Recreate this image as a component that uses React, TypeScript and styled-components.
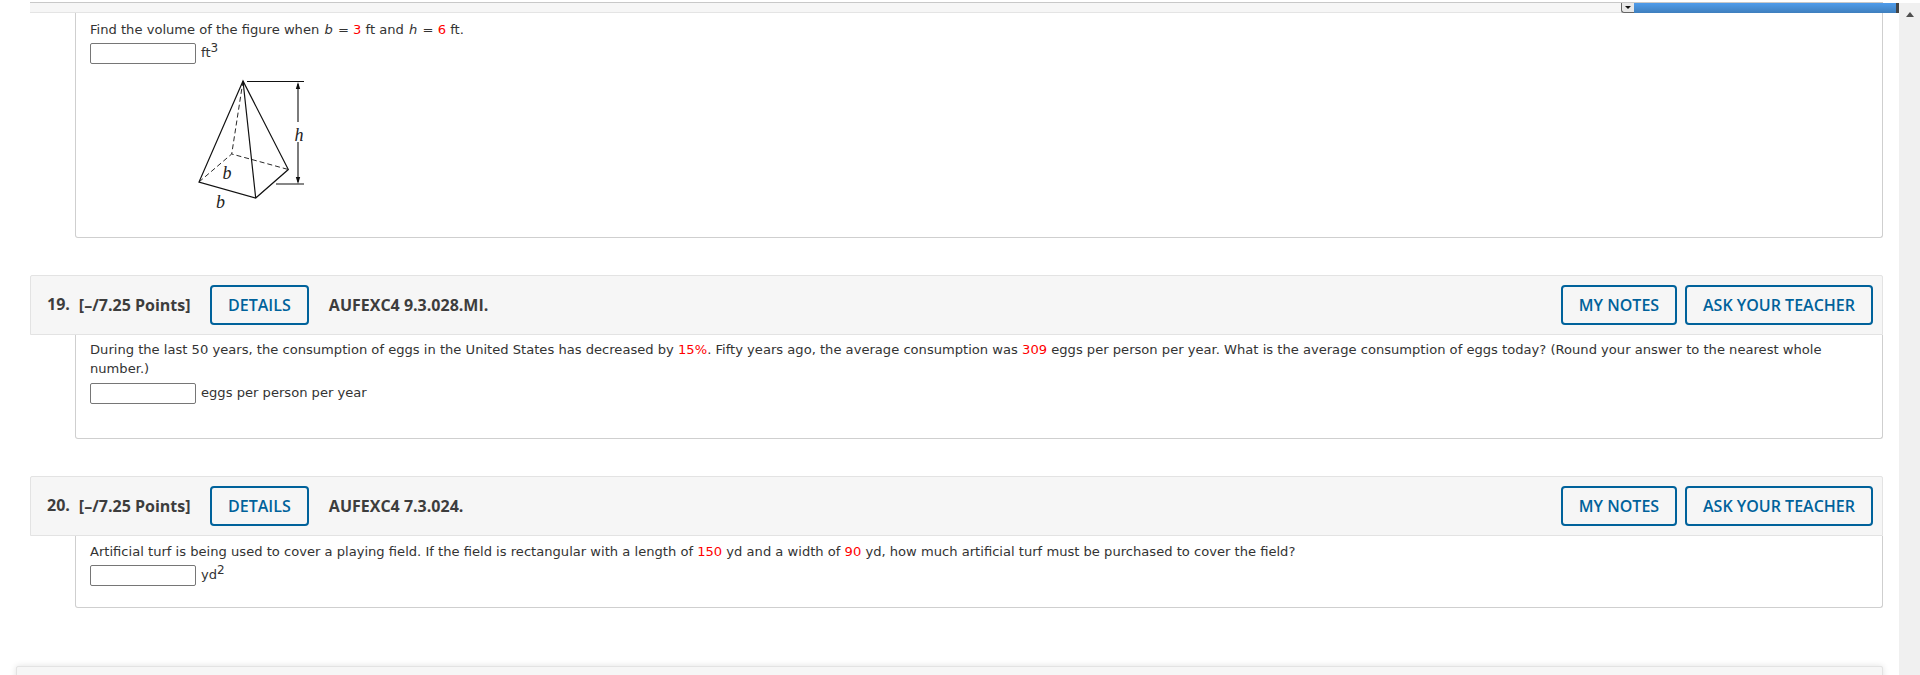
import styled, { createGlobalStyle } from "styled-components";

const GlobalStyle = createGlobalStyle`
  html, body {
    margin: 0;
    padding: 0;
    background: #fff;
    overflow: hidden;
  }
`;

const Page = styled.div`
  display: flex;
  width: 1920px;
  height: 675px;
  overflow: hidden;
  position: relative;
`;
const Main = styled.div`
  flex: 1;
  min-width: 0;
  padding: 0 16px 0 30px;
  border-top: 2px solid #fff;
`;
const TopStrip = styled.div`
  height: 9px;
  background: #f6f6f6;
  border-top: 1px solid #c8c8c8;
  border-bottom: 1px solid #e4e4e4;
`;
const Body = styled.div<{ $height: number; $top: number }>`
  box-sizing: border-box;
  height: ${(p) => p.$height}px;
  margin-left: 45px;
  padding: ${(p) => p.$top}px 14px 0;
  background: #fff;
  border: 1px solid #cfcfcf;
  border-top: none;
  border-radius: 0 0 3px 3px;
  font-family: "DejaVu Sans", Verdana, sans-serif;
  font-size: 13.1px;
  line-height: 18.5px;
  color: #333;
`;
const Prompt = styled.div`
  color: #333;
`;
const Red = styled.span`
  color: #f00;
`;
const Var = styled.i`
  font-style: italic;
  margin: 0 1px;
`;
const AnswerRow = styled.div<{ $gap: number }>`
  display: flex;
  align-items: center;
  gap: 5px;
  margin-top: ${(p) => p.$gap}px;
`;
const AnswerInput = styled.input`
  box-sizing: border-box;
  width: 106px;
  height: 21px;
  padding: 0;
  background: #fff;
  border: 1px solid #767676;
  border-radius: 2px;
`;
const Unit = styled.span`
  sup {
    font-size: 12px;
    line-height: 0;
  }
`;
const Figure = styled.svg`
  display: block;
  margin: 11px 0 0 100px;
`;
const Header = styled.div<{ $gapTop: number }>`
  display: flex;
  align-items: center;
  box-sizing: border-box;
  height: 60px;
  margin-top: ${(p) => p.$gapTop}px;
  padding: 0 9px 0 16px;
  background: #f6f6f6;
  border: 1px solid #e3e3e3;
  border-radius: 2px 2px 0 0;
  font-family: "Open Sans", sans-serif;
  font-weight: 700;
  font-size: 16px;
  color: #3d3d3d;
`;
const QuestionNumber = styled.span`
  margin-right: 9px;
  transform: translateY(-1px);
`;
const Points = styled.span`
  flex: none;
  width: 131px;
`;
const Code = styled.span`
  margin-left: 20px;
  flex: 1;
`;
const OutlineButton = styled.button<{ $width: number }>`
  box-sizing: border-box;
  width: ${(p) => p.$width}px;
  height: 40px;
  padding: 0;
  background: transparent;
  border: 2px solid #00629b;
  border-radius: 4px;
  font-family: "Open Sans", sans-serif;
  font-weight: 600;
  font-size: 16px;
  color: #00629b;
  & + & {
    margin-left: 8px;
  }
`;
const BottomCard = styled.div`
  height: 30px;
  margin: 58px 0 0 -14px;
  background: #f6f6f6;
  border: 1px solid #e3e3e3;
  border-radius: 2px;
  box-shadow: 0 0 6px rgba(0, 0, 0, 0.12);
`;
const ProgressBar = styled.div`
  position: absolute;
  top: 3px;
  left: 1634px;
  width: 265px;
  height: 10px;
  box-sizing: border-box;
  background: linear-gradient(#4f9ceb, #3f7fbd);
  border-right: 3px solid #444;
`;
const Toggle = styled.div`
  position: absolute;
  top: 3px;
  left: 1621px;
  width: 13px;
  height: 10px;
  box-sizing: border-box;
  display: flex;
  align-items: center;
  justify-content: center;
  background: #e8e8e8;
  border-left: 1px solid #666;
  border-bottom: 1px solid #666;
  border-radius: 0 0 0 3px;
  &::after {
    content: "";
    border-left: 3px solid transparent;
    border-right: 3px solid transparent;
    border-top: 3px solid #111;
  }
`;
const Scrollbar = styled.div`
  flex: none;
  width: 21px;
  background: #f0f0f0;
  margin-top: 3px;
  display: flex;
  justify-content: center;
  padding-top: 9px;
  box-sizing: border-box;
  &::before {
    content: "";
    width: 0;
    height: 0;
    border-left: 4.5px solid transparent;
    border-right: 4.5px solid transparent;
    border-bottom: 5px solid #505050;
  }
`;

function Pyramid() {
  return (
    <Figure width="130" height="140" viewBox="190 75 130 140" fill="none" stroke="#111">
      <path d="M243 81 L199 182 L255.7 198 L288.3 169.5 Z M243 81 L255.7 198" strokeWidth="1.2" />
      <path d="M243 81 L231.7 154 M199 182 L231.7 154 L288.3 169.5" strokeWidth="0.9" strokeDasharray="5 3" />
      <path d="M247 81.5 H304 M276 184 H304 M298 84 V122 M298 142 V182" strokeWidth="1.1" />
      <path d="M298 82 l-2.2 7 h4.4 Z M298 184 l-2.2 -7 h4.4 Z" fill="#111" stroke="none" />
      <g fill="#222" stroke="none" fontFamily="'Liberation Serif', serif" fontStyle="italic" fontSize="18">
        <text x="294.5" y="141">h</text>
        <text x="222.5" y="179">b</text>
        <text x="216" y="208">b</text>
      </g>
    </Figure>
  );
}

interface QuestionHeaderProps {
  num: number;
  code: string;
  gapTop: number;
}

function QuestionHeader({ num, code, gapTop }: QuestionHeaderProps) {
  return (
    <Header $gapTop={gapTop}>
      <QuestionNumber>{num}.</QuestionNumber>
      <Points>[–/7.25 Points]</Points>
      <OutlineButton $width={99}>DETAILS</OutlineButton>
      <Code>{code}</Code>
      <OutlineButton $width={116}>MY NOTES</OutlineButton>
      <OutlineButton $width={188}>ASK YOUR TEACHER</OutlineButton>
    </Header>
  );
}

export default function App() {
  return (
    <Page>
      <GlobalStyle />
      <Main>
        <TopStrip />
        <Body $height={225} $top={8}>
          <Prompt>
            Find the volume of the figure when <Var>b</Var> = <Red>3</Red> ft and <Var>h</Var> = <Red>6</Red> ft.
          </Prompt>
          <AnswerRow $gap={3.5}>
            <AnswerInput />
            <Unit>
              ft<sup>3</sup>
            </Unit>
          </AnswerRow>
          <Pyramid />
        </Body>

        <QuestionHeader num={19} code="AUFEXC4 9.3.028.MI." gapTop={37} />
        <Body $height={104} $top={6}>
          <Prompt>
            During the last 50 years, the consumption of eggs in the United States has decreased by <Red>15%</Red>. Fifty
            years ago, the average consumption was <Red>309</Red> eggs per person per year. What is the average
            consumption of eggs today? (Round your answer to the nearest whole number.)
          </Prompt>
          <AnswerRow $gap={5}>
            <AnswerInput />
            <Unit>eggs per person per year</Unit>
          </AnswerRow>
        </Body>

        <QuestionHeader num={20} code="AUFEXC4 7.3.024." gapTop={37} />
        <Body $height={72} $top={7}>
          <Prompt>
            Artificial turf is being used to cover a playing field. If the field is rectangular with a length of{" "}
            <Red>150</Red> yd and a width of <Red>90</Red> yd, how much artificial turf must be purchased to cover the
            field?
          </Prompt>
          <AnswerRow $gap={3.5}>
            <AnswerInput />
            <Unit>
              yd<sup>2</sup>
            </Unit>
          </AnswerRow>
        </Body>

        <BottomCard />
      </Main>
      <Scrollbar />
      <Toggle />
      <ProgressBar />
    </Page>
  );
}
